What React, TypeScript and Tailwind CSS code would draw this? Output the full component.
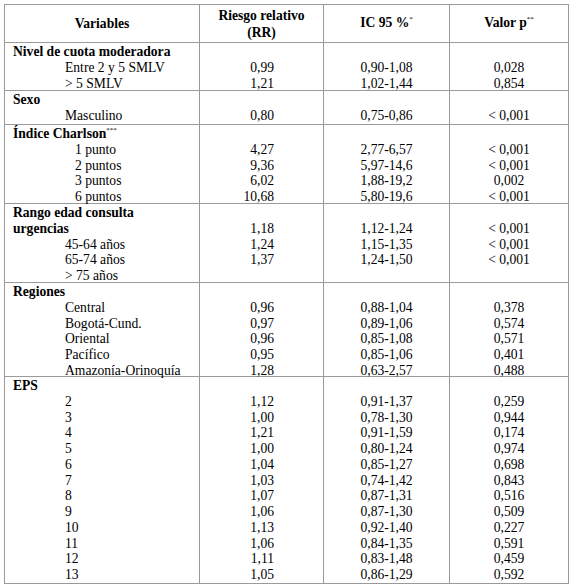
import React from "react";

type Row = { label: string; rr: string; ic: string; p: string };
type Section = {
  title: string[];
  sup?: string;
  h: string;
  indent: string;
  titleValues?: { rr: string; ic: string; p: string };
  rows: Row[];
};

const sections: Section[] = [
  {
    title: ["Nivel de cuota moderadora"],
    h: "h-[48px]",
    indent: "pl-[52px]",
    rows: [
      { label: "Entre 2 y 5 SMLV", rr: "0,99", ic: "0,90-1,08", p: "0,028" },
      { label: "> 5 SMLV", rr: "1,21", ic: "1,02-1,44", p: "0,854" },
    ],
  },
  {
    title: ["Sexo"],
    h: "h-[34px]",
    indent: "pl-[52px]",
    rows: [{ label: "Masculino", rr: "0,80", ic: "0,75-0,86", p: "< 0,001" }],
  },
  {
    title: ["Índice Charlson"],
    sup: "***",
    h: "h-[79px]",
    indent: "pl-[62px]",
    rows: [
      { label: "1 punto", rr: "4,27", ic: "2,77-6,57", p: "< 0,001" },
      { label: "2 puntos", rr: "9,36", ic: "5,97-14,6", p: "< 0,001" },
      { label: "3 puntos", rr: "6,02", ic: "1,88-19,2", p: "0,002" },
      { label: "6 puntos", rr: "10,68", ic: "5,80-19,6", p: "< 0,001" },
    ],
  },
  {
    title: ["Rango edad consulta", "urgencias"],
    h: "h-[79px]",
    indent: "pl-[52px]",
    titleValues: { rr: "1,18", ic: "1,12-1,24", p: "< 0,001" },
    rows: [
      { label: "45-64 años", rr: "1,24", ic: "1,15-1,35", p: "< 0,001" },
      { label: "65-74 años", rr: "1,37", ic: "1,24-1,50", p: "< 0,001" },
      { label: "> 75 años", rr: "", ic: "", p: "" },
    ],
  },
  {
    title: ["Regiones"],
    h: "h-[94px]",
    indent: "pl-[52px]",
    rows: [
      { label: "Central", rr: "0,96", ic: "0,88-1,04", p: "0,378" },
      { label: "Bogotá-Cund.", rr: "0,97", ic: "0,89-1,06", p: "0,574" },
      { label: "Oriental", rr: "0,96", ic: "0,85-1,08", p: "0,571" },
      { label: "Pacífico", rr: "0,95", ic: "0,85-1,06", p: "0,401" },
      { label: "Amazonía-Orinoquía", rr: "1,28", ic: "0,63-2,57", p: "0,488" },
    ],
  },
  {
    title: ["EPS"],
    h: "h-[207px]",
    indent: "pl-[52px]",
    rows: [
      { label: "2", rr: "1,12", ic: "0,91-1,37", p: "0,259" },
      { label: "3", rr: "1,00", ic: "0,78-1,30", p: "0,944" },
      { label: "4", rr: "1,21", ic: "0,91-1,59", p: "0,174" },
      { label: "5", rr: "1,00", ic: "0,80-1,24", p: "0,974" },
      { label: "6", rr: "1,04", ic: "0,85-1,27", p: "0,698" },
      { label: "7", rr: "1,03", ic: "0,74-1,42", p: "0,843" },
      { label: "8", rr: "1,07", ic: "0,87-1,31", p: "0,516" },
      { label: "9", rr: "1,06", ic: "0,87-1,30", p: "0,509" },
      { label: "10", rr: "1,13", ic: "0,92-1,40", p: "0,227" },
      { label: "11", rr: "1,06", ic: "0,84-1,35", p: "0,591" },
      { label: "12", rr: "1,11", ic: "0,83-1,48", p: "0,459" },
      { label: "13", rr: "1,05", ic: "0,86-1,29", p: "0,592" },
    ],
  },
];

const L = "h-[15.75px] whitespace-pre";

function SectionRow({ s }: { s: Section }) {
  const blanks = s.title.length - 1;
  const pre = (key: string, v?: string) => (
    <>
      {Array.from({ length: blanks }).map((_, i) => (
        <div key={key + i} className={L}>
          {" "}
        </div>
      ))}
      <div className={L}>{v ?? " "}</div>
    </>
  );
  return (
    <div
      className={`grid grid-cols-[194px_124px_126px_119px] border-t border-[#9a9a9a] ${s.h}`}
    >
      <div className="pl-[8px] pt-[1px]">
        {s.title.map((t, i) => (
          <div key={i} className={`${L} font-bold`}>
            {t}
            {s.sup && i === s.title.length - 1 ? (
              <span className="relative -top-[6px] text-[7px] font-normal">{s.sup}</span>
            ) : null}
          </div>
        ))}
        {s.rows.map((r, i) => (
          <div key={i} className={`${L} ${s.indent}`}>
            {r.label}
          </div>
        ))}
      </div>
      <div className="border-l border-[#9a9a9a] pt-[1px] pr-[49px] text-right">
        {pre("rr", s.titleValues?.rr)}
        {s.rows.map((r, i) => (
          <div key={i} className={L}>
            {r.rr}
          </div>
        ))}
      </div>
      <div className="border-l border-[#9a9a9a] pt-[1px] text-center">
        {pre("ic", s.titleValues?.ic)}
        {s.rows.map((r, i) => (
          <div key={i} className={L}>
            {r.ic}
          </div>
        ))}
      </div>
      <div className="border-l border-[#9a9a9a] pt-[1px] text-center">
        {pre("p", s.titleValues?.p)}
        {s.rows.map((r, i) => (
          <div key={i} className={L}>
            {r.p}
          </div>
        ))}
      </div>
    </div>
  );
}

export default function App() {
  return (
    <div className="min-h-[587px] w-[574px] bg-white pl-[4px] pt-[4px] font-['Liberation_Serif','Times_New_Roman',serif] text-[13.6px] leading-[15.75px] text-black">
      <div className="w-[565px] border border-[#9a9a9a]">
        <div className="grid h-[37px] grid-cols-[194px_124px_126px_119px] font-bold leading-[17px]">
          <div className="flex items-center justify-center">Variables</div>
          <div className="flex flex-col items-center justify-center border-l border-[#9a9a9a] text-center">
            <div>Riesgo relativo</div>
            <div>(RR)</div>
          </div>
          <div className="flex items-center justify-center border-l border-[#9a9a9a]">
            <span>
              IC 95 %
              <span className="relative -top-[6px] text-[7px] font-normal">*</span>
            </span>
          </div>
          <div className="flex items-center justify-center border-l border-[#9a9a9a]">
            <span>
              Valor p
              <span className="relative -top-[6px] text-[7px] font-normal">**</span>
            </span>
          </div>
        </div>
        {sections.map((s, i) => (
          <SectionRow key={i} s={s} />
        ))}
      </div>
    </div>
  );
}
